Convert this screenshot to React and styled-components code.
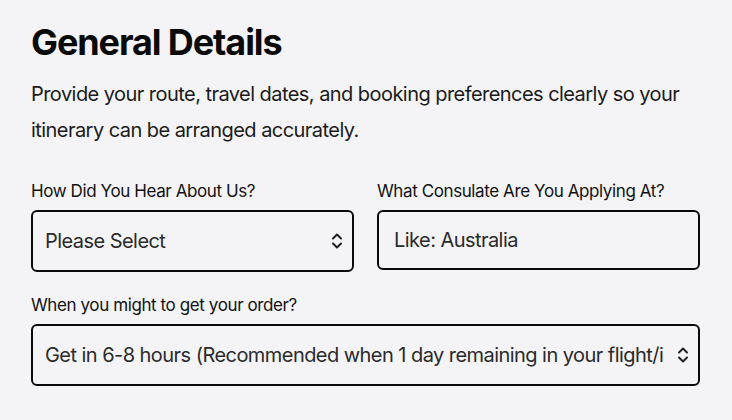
import React from 'react';
import styled, { createGlobalStyle } from 'styled-components';

const GlobalStyle = createGlobalStyle`
  body {
    margin: 0;
    background: #f4f4f6;
    font-family: Inter, "Noto Sans", sans-serif;
    color: #111;
  }
`;

const Page = styled.div`
  padding: 20px 32px 30px 31px;
`;

const Title = styled.h1`
  margin: 0;
  font-size: 36px;
  font-weight: 700;
  letter-spacing: -1.1px;
  line-height: 44px;
  color: #0a0a0a;
`;

const Intro = styled.p`
  margin: 12px 0 0;
  font-size: 20px;
  line-height: 36px;
  color: #1a1a1a;
  letter-spacing: -0.55px;
`;

const Grid = styled.div`
  display: grid;
  grid-template-columns: 1fr 1fr;
  column-gap: 23px;
  margin-top: 32px;
`;

const Field = styled.div`
  display: flex;
  flex-direction: column;
  grid-column: ${p => (p.$wide ? '1 / -1' : 'auto')};
  margin-top: ${p => (p.$wide ? '22px' : '0')};
`;

const Label = styled.label`
  font-size: 17px;
  line-height: 22px;
  letter-spacing: -0.4px;
  color: #111;
  margin-bottom: 8px;
`;

const SelectWrap = styled.div`
  position: relative;
`;

const Select = styled.select`
  appearance: none;
  width: 100%;
  height: 62px;
  box-sizing: border-box;
  border: 2px solid #0a0a0a;
  border-radius: 6px;
  background: #f4f4f6;
  padding: 0 35px 0 12px;
  font-family: Inter, sans-serif;
  font-size: 20px;
  letter-spacing: -0.55px;
  color: #2a2a2a;
  outline: none;
`;

const Chevron = styled.svg`
  position: absolute;
  right: 10px;
  top: 50%;
  transform: translateY(-50%);
  pointer-events: none;
`;

const Input = styled.input`
  width: 100%;
  height: 60px;
  box-sizing: border-box;
  border: 2px solid #0a0a0a;
  border-radius: 6px;
  background: #f4f4f6;
  padding: 0 15px;
  font-family: Inter, sans-serif;
  font-size: 20px;
  letter-spacing: -0.55px;
  color: #2a2a2a;
  outline: none;

  &::placeholder {
    color: #2a2a2a;
    opacity: 1;
  }
`;

const UpDown = () => (
  <Chevron width="14" height="20" viewBox="0 0 14 20" fill="none">
    <path d="M3 7.5l4-4 4 4M3 12.5l4 4 4-4" stroke="#222" strokeWidth="2" strokeLinecap="round" strokeLinejoin="round" />
  </Chevron>
);

export default function App() {
  return (
    <Page>
      <GlobalStyle />
      <Title>General Details</Title>
      <Intro>
        Provide your route, travel dates, and booking preferences clearly so your itinerary can be
        arranged accurately.
      </Intro>
      <Grid>
        <Field>
          <Label>How Did You Hear About Us?</Label>
          <SelectWrap>
            <Select defaultValue="">
              <option value="">Please Select</option>
              <option>Search Engine</option>
              <option>Social Media</option>
              <option>Friend</option>
            </Select>
            <UpDown />
          </SelectWrap>
        </Field>
        <Field>
          <Label>What Consulate Are You Applying At?</Label>
          <Input placeholder="Like: Australia" />
        </Field>
        <Field $wide>
          <Label>When you might to get your order?</Label>
          <SelectWrap>
            <Select defaultValue="fast">
              <option value="fast">
                Get in 6-8 hours (Recommended when 1 day remaining in your flight/interview)
              </option>
              <option>Get in 24 hours</option>
            </Select>
            <UpDown />
          </SelectWrap>
        </Field>
      </Grid>
    </Page>
  );
}
